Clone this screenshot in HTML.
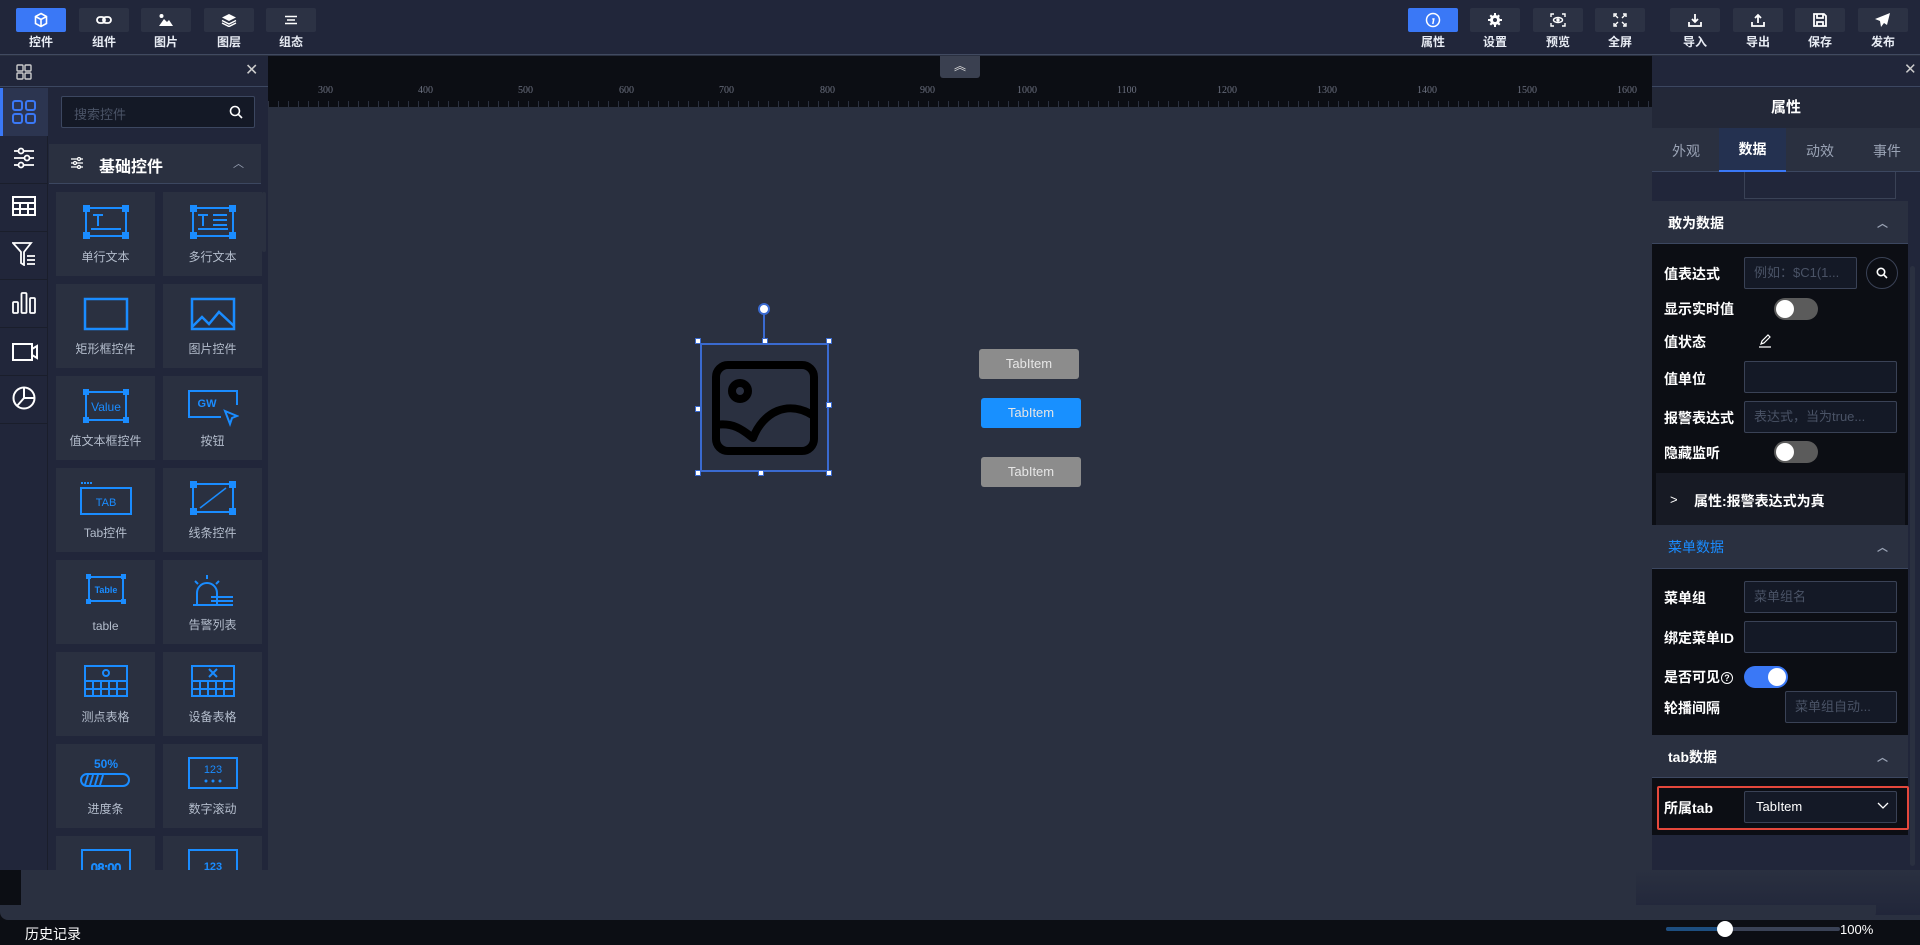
<!DOCTYPE html>
<html><head><meta charset="utf-8"><style>
*{box-sizing:border-box;margin:0;padding:0}
body{width:1920px;height:945px;overflow:hidden;background:#2a3040;font-family:"Liberation Sans","Noto Sans CJK SC",sans-serif;position:relative;color:#fff}
.abs{position:absolute}
.top{left:0;top:0;width:1920px;height:55px;background:#21263a;border-bottom:1px solid #414a60}
.tb{position:absolute;top:8px;width:50px;height:24px;background:#2c3244;border-radius:2px;display:flex;align-items:center;justify-content:center}
.tb.on{background:#3a78f6}
.tl{position:absolute;top:33px;width:50px;text-align:center;font-size:12px;font-weight:bold;color:#e8ecf4}
.ruler{left:268px;top:56px;width:1384px;height:51px;background:#0c0e14}
.rl{position:absolute;top:29px;font-family:"Liberation Serif",serif;font-size:10px;color:#6c7180}
.lp{left:0;top:56px;width:268px;height:814px;background:#21263a}
.card{position:absolute;width:99px;height:84px;background:#2a3040;text-align:center}
.card .lb{position:absolute;bottom:11px;width:100%;font-size:12px;color:#b4bdcc}
.card svg{position:absolute;left:50%;top:13px;transform:translateX(-50%)}
.rp{left:1652px;top:56px;width:268px;height:814px;background:#21263a}
.sec{position:absolute;left:0;width:256px;background:#2a3040;border-bottom:1px solid #3c4760;font-size:14px;font-weight:bold}
.dark{position:absolute;left:0;width:256px;background:#0c0e14}
.lab{position:absolute;left:12px;font-size:14px;font-weight:bold;color:#fff}
.inp{position:absolute;border:1px solid #3a4256;background:#141926;border-radius:2px;font-size:13px;color:#4a5366;padding-left:9px;line-height:30px;white-space:nowrap;overflow:hidden}
.tg{position:absolute;width:44px;height:22px;border-radius:11px;background:#5b5b5b}
.tg::after{content:"";position:absolute;left:2px;top:2px;width:18px;height:18px;border-radius:50%;background:#fff}
.tg.on{background:#3a78f6}.tg.on::after{left:24px}
.caret{position:absolute;right:20px;font-size:11px;color:#9aa3b5}
.tab{position:absolute;border-radius:3px;color:#e6e6e6;font-size:13px;text-align:center;line-height:30px}
</style></head><body>

<div class="abs top">
 <div class="tb on" style="left:16px"><svg width="16" height="16" viewBox="0 0 16 16" fill="none" stroke="#fff" stroke-width="1.6"><path d="M8 1.5l5.5 3v7L8 14.5l-5.5-3v-7z M2.5 4.5L8 7.5l5.5-3 M8 7.5v7"/></svg></div><div class="tl" style="left:16px">控件</div>
 <div class="tb" style="left:79px"><svg width="16" height="10" viewBox="0 0 16 10" fill="none" stroke="#fff" stroke-width="1.8"><rect x="1" y="2" width="8" height="6" rx="3"/><rect x="7" y="2" width="8" height="6" rx="3"/></svg></div><div class="tl" style="left:79px">组件</div>
 <div class="tb" style="left:141px"><svg width="16" height="14" viewBox="0 0 16 14" fill="#fff"><circle cx="3.5" cy="3" r="2"/><path d="M1 13l5-7 3 3 2-2 4 6z"/></svg></div><div class="tl" style="left:141px">图片</div>
 <div class="tb" style="left:204px"><svg width="16" height="14" viewBox="0 0 16 14" fill="#fff"><path d="M8 1l7 3.5-7 3.5-7-3.5z"/><path d="M1 7.5l7 3.5 7-3.5" stroke="#fff" fill="none" stroke-width="1.5"/><path d="M1 10l7 3.5 7-3.5" stroke="#fff" fill="none" stroke-width="1.5"/></svg></div><div class="tl" style="left:204px">图层</div>
 <div class="tb" style="left:266px"><svg width="14" height="10" viewBox="0 0 14 10" stroke="#fff" stroke-width="1.5"><path d="M1 1.5h12M3 5h8M1 8.5h12"/></svg></div><div class="tl" style="left:266px">组态</div>

 <div class="tb on" style="left:1408px"><svg width="16" height="16" viewBox="0 0 16 16" fill="none" stroke="#fff" stroke-width="1.5"><circle cx="8" cy="8" r="6.5"/><path d="M8.5 4.2v.1M7.3 7h1.5l-1 5"/></svg></div><div class="tl" style="left:1408px">属性</div>
 <div class="tb" style="left:1470px"><svg width="14" height="14" viewBox="0 0 14 14" fill="#fff"><circle cx="7" cy="7" r="5"/><path d="M6 0h2v3H6zM6 11h2v3H6zM0 6h3v2H0zM11 6h3v2h-3z" /><path d="M1.5 3l1.5-1.5 2 2-1.5 1.5zM9 10.5l1.5-1.5 2 2-1.5 1.5zM10.5 1.5L12 3l-2 2-1.5-1.5zM3 12.5L1.5 11l2-2L5 10.5z"/><circle cx="7" cy="7" r="2" fill="#2c3244"/></svg></div><div class="tl" style="left:1470px">设置</div>
 <div class="tb" style="left:1533px"><svg width="16" height="14" viewBox="0 0 16 14" fill="none" stroke="#fff" stroke-width="1.4"><path d="M1 4V1h3M12 1h3v3M15 10v3h-3M4 13H1v-3"/><ellipse cx="8" cy="7" rx="4.5" ry="2.5"/><circle cx="8" cy="7" r="1" fill="#fff"/></svg></div><div class="tl" style="left:1533px">预览</div>
 <div class="tb" style="left:1595px"><svg width="14" height="14" viewBox="0 0 14 14" fill="none" stroke="#fff" stroke-width="1.4"><path d="M1 4V1h3M10 1h3v3M13 10v3h-3M4 13H1v-3M2 2l3 3M12 2L9 5M12 12L9 9M2 12l3-3"/></svg></div><div class="tl" style="left:1595px">全屏</div>
 <div class="tb" style="left:1670px"><svg width="14" height="14" viewBox="0 0 14 14" fill="none" stroke="#fff" stroke-width="1.8"><path d="M7 1v8M4 6l3 3 3-3M1 9v4h12V9"/></svg></div><div class="tl" style="left:1670px">导入</div>
 <div class="tb" style="left:1733px"><svg width="14" height="14" viewBox="0 0 14 14" fill="none" stroke="#fff" stroke-width="1.8"><path d="M7 10V2M4 5l3-3 3 3M1 9v4h12V9"/></svg></div><div class="tl" style="left:1733px">导出</div>
 <div class="tb" style="left:1795px"><svg width="14" height="14" viewBox="0 0 14 14" fill="none" stroke="#fff" stroke-width="1.8"><path d="M1 1h10l2 2v10H1z M4 1v4h6V1 M4 13V9h6v4"/></svg></div><div class="tl" style="left:1795px">保存</div>
 <div class="tb" style="left:1858px"><svg width="16" height="14" viewBox="0 0 16 14" fill="#fff"><path d="M15 0L0 6l5 2 1 6 3-4 3 2z"/></svg></div><div class="tl" style="left:1858px">发布</div>
</div>

<div class="abs ruler">
 <div class="abs" style="left:0;bottom:0;width:1384px;height:6px;background:repeating-linear-gradient(90deg,#2c3140 0 1px,transparent 1px 10px)"></div>
 <span class="rl" style="left:50px">300</span><span class="rl" style="left:150px">400</span><span class="rl" style="left:250px">500</span><span class="rl" style="left:351px">600</span><span class="rl" style="left:451px">700</span><span class="rl" style="left:552px">800</span><span class="rl" style="left:652px">900</span><span class="rl" style="left:749px">1000</span><span class="rl" style="left:849px">1100</span><span class="rl" style="left:949px">1200</span><span class="rl" style="left:1049px">1300</span><span class="rl" style="left:1149px">1400</span><span class="rl" style="left:1249px">1500</span><span class="rl" style="left:1349px">1600</span>
</div>
<div class="abs" style="left:940px;top:56px;width:40px;height:22px;background:#3a4050;border-radius:0 0 3px 3px;text-align:center;color:#ddd;font-size:12px;line-height:20px">︽</div>

<!-- canvas element -->
<div class="abs" style="left:700px;top:343px;width:129px;height:129px;border:2px solid #3a6ad0"></div>
<div class="abs" style="left:763px;top:311px;width:2px;height:32px;background:#3a6ad0"></div>
<div class="abs" style="left:758px;top:303px;width:12px;height:12px;border-radius:50%;background:#fff;border:2px solid #3a6ad0"></div>
<div class="abs" style="left:695px;top:338px;width:6px;height:6px;background:#fff;border:1px solid #3a6ad0"></div>
<div class="abs" style="left:762px;top:338px;width:6px;height:6px;background:#fff;border:1px solid #3a6ad0"></div>
<div class="abs" style="left:826px;top:338px;width:6px;height:6px;background:#fff;border:1px solid #3a6ad0"></div>
<div class="abs" style="left:695px;top:406px;width:6px;height:6px;background:#fff;border:1px solid #3a6ad0"></div>
<div class="abs" style="left:826px;top:402px;width:6px;height:6px;background:#fff;border:1px solid #3a6ad0"></div>
<div class="abs" style="left:695px;top:470px;width:6px;height:6px;background:#fff;border:1px solid #3a6ad0"></div>
<div class="abs" style="left:758px;top:470px;width:6px;height:6px;background:#fff;border:1px solid #3a6ad0"></div>
<div class="abs" style="left:826px;top:470px;width:6px;height:6px;background:#fff;border:1px solid #3a6ad0"></div>
<svg class="abs" style="left:712px;top:361px" width="106" height="94" viewBox="0 0 106 94" fill="none" stroke="#000" stroke-width="8" stroke-linejoin="round"><rect x="4" y="4" width="98" height="86" rx="12"/><circle cx="28" cy="30" r="8"/><path d="M4 64c18-3 28 6 37 13 10-26 35-39 61-22"/></svg>
<div class="tab" style="left:979px;top:349px;width:100px;height:30px;background:#8c8c8c">TabItem</div>
<div class="tab" style="left:981px;top:398px;width:100px;height:30px;background:#1890ff">TabItem</div>
<div class="tab" style="left:981px;top:457px;width:100px;height:30px;background:#8c8c8c">TabItem</div>

<!-- left panel -->
<div class="abs lp">
 <div class="abs" style="left:0;top:0;width:268px;height:31px;border-bottom:1px solid #3c4760"></div>
 <svg class="abs" style="left:16px;top:8px" width="16" height="16" viewBox="0 0 16 16" fill="none" stroke="#ccc" stroke-width="1.4"><rect x="1" y="1" width="6" height="6" rx="1"/><rect x="9" y="1" width="6" height="6" rx="1"/><rect x="1" y="9" width="6" height="6" rx="1"/><rect x="9" y="9" width="6" height="6" rx="1"/></svg>
 <div class="abs" style="left:245px;top:4px;font-size:16px;color:#ccc">✕</div>
 <div class="abs" style="left:0;top:32px;width:48px;height:782px;background:#21263a;border-right:1px solid #1a1e2b"></div>
 <div class="abs" style="left:0;top:32px;width:48px;height:48px;background:#2c3550;border-left:3px solid #3a78f6"></div>
 <svg class="abs" style="left:12px;top:44px" width="24" height="24" viewBox="0 0 24 24" fill="none" stroke="#3a78f6" stroke-width="2"><rect x="1" y="1" width="9" height="9" rx="2"/><rect x="14" y="1" width="9" height="9" rx="2"/><rect x="1" y="14" width="9" height="9" rx="2"/><rect x="14" y="14" width="9" height="9" rx="2"/></svg>
 <svg class="abs" style="left:13px;top:91px" width="22" height="22" viewBox="0 0 22 22" fill="none" stroke="#fff" stroke-width="1.8"><path d="M1 4h20M1 11h20M1 18h20"/><circle cx="8" cy="4" r="2.5" fill="#21263a"/><circle cx="14" cy="11" r="2.5" fill="#21263a"/><circle cx="8" cy="18" r="2.5" fill="#21263a"/></svg>
 <div class="abs" style="left:0;top:127px;width:48px;height:1px;background:#1a1e2b"></div>
 <svg class="abs" style="left:12px;top:140px" width="24" height="20" viewBox="0 0 24 20" fill="none" stroke="#fff" stroke-width="2"><rect x="1" y="1" width="22" height="18"/><path d="M1 7h22M1 13h22M8 7v12M16 7v12"/></svg>
 <div class="abs" style="left:0;top:175px;width:48px;height:1px;background:#1a1e2b"></div>
 <svg class="abs" style="left:12px;top:186px" width="26" height="24" viewBox="0 0 26 24" fill="none" stroke="#fff" stroke-width="1.8"><path d="M1 1h18l-7 9v13l-3-2v-11z M15 14h8M15 18h8M15 22h8"/></svg>
 <div class="abs" style="left:0;top:223px;width:48px;height:1px;background:#1a1e2b"></div>
 <svg class="abs" style="left:12px;top:236px" width="24" height="22" viewBox="0 0 24 22" fill="none" stroke="#fff" stroke-width="1.8"><rect x="1" y="10" width="5" height="11" rx="1"/><rect x="9.5" y="1" width="5" height="20" rx="1"/><rect x="18" y="6" width="5" height="15" rx="1"/></svg>
 <div class="abs" style="left:0;top:271px;width:48px;height:1px;background:#1a1e2b"></div>
 <svg class="abs" style="left:12px;top:287px" width="26" height="18" viewBox="0 0 26 18" fill="none" stroke="#fff" stroke-width="2"><rect x="1" y="1" width="19" height="16"/><path d="M20 6l5-3v12l-5-3"/></svg>
 <div class="abs" style="left:0;top:319px;width:48px;height:1px;background:#1a1e2b"></div>
 <svg class="abs" style="left:12px;top:330px" width="24" height="24" viewBox="0 0 24 24" fill="none" stroke="#fff" stroke-width="2"><circle cx="12" cy="12" r="10.5"/><path d="M12 1.5V12h10.5M12 12l-7 8"/></svg>
 <div class="abs" style="left:0;top:367px;width:48px;height:1px;background:#1a1e2b"></div>

 <div class="abs" style="left:61px;top:40px;width:194px;height:32px;border:1px solid #3c4760;background:#141926;border-radius:2px;font-size:13px;color:#4a5366;padding:7px 12px">搜索控件</div>
 <svg class="abs" style="left:229px;top:49px" width="14" height="14" viewBox="0 0 14 14" fill="none" stroke="#fff" stroke-width="1.6"><circle cx="6" cy="6" r="4.5"/><path d="M9.5 9.5l3.5 3.5"/></svg>
 <div class="abs" style="left:49px;top:88px;width:212px;height:40px;background:#2a3040;border-bottom:1px solid #3c4760"></div>
 <svg class="abs" style="left:70px;top:101px" width="14" height="12" viewBox="0 0 14 12" fill="none" stroke="#fff" stroke-width="1.3"><path d="M1 2h12M1 6h12M1 10h12"/><circle cx="9" cy="2" r="1.5" fill="#2a3040"/><circle cx="5" cy="6" r="1.5" fill="#2a3040"/><circle cx="9" cy="10" r="1.5" fill="#2a3040"/></svg>
 <div class="abs" style="left:99px;top:97px;font-size:16px;font-weight:bold">基础控件</div>
 <div class="abs" style="left:233px;top:99px;font-size:11px;color:#9aa3b5">︿</div>
 <div class="abs" style="left:262px;top:136px;width:4px;height:60px;background:#2a3040;border-radius:2px"></div>

 <div class="card" style="left:56px;top:136px"><svg width="46" height="34" viewBox="0 0 46 34" fill="none" stroke="#1a8cff" stroke-width="2"><rect x="3" y="3" width="40" height="28"/><path d="M8 24h30M10 10h10M15 10v11"/><g fill="#1a8cff"><rect x="0" y="0" width="6" height="6"/><rect x="40" y="0" width="6" height="6"/><rect x="0" y="28" width="6" height="6"/><rect x="40" y="28" width="6" height="6"/></g></svg><div class="lb">单行文本</div></div>
 <div class="card" style="left:163px;top:136px"><svg width="46" height="34" viewBox="0 0 46 34" fill="none" stroke="#1a8cff" stroke-width="2"><rect x="3" y="3" width="40" height="28"/><path d="M8 24h30M8 10h10M13 10v11M23 10h14M23 15h14M23 20h14"/><g fill="#1a8cff"><rect x="0" y="0" width="6" height="6"/><rect x="40" y="0" width="6" height="6"/><rect x="0" y="28" width="6" height="6"/><rect x="40" y="28" width="6" height="6"/></g></svg><div class="lb">多行文本</div></div>
 <div class="card" style="left:56px;top:228px"><svg width="46" height="34" viewBox="0 0 46 34" fill="none" stroke="#1a8cff" stroke-width="2.5"><rect x="2" y="2" width="42" height="30"/></svg><div class="lb">矩形框控件</div></div>
 <div class="card" style="left:163px;top:228px"><svg width="46" height="34" viewBox="0 0 46 34" fill="none" stroke="#1a8cff" stroke-width="2.5"><rect x="2" y="2" width="42" height="30"/><path d="M2 30l10-10 7 7 10-12 15 14"/></svg><div class="lb">图片控件</div></div>
 <div class="card" style="left:56px;top:320px"><svg width="46" height="34" viewBox="0 0 46 34"><rect x="3" y="3" width="40" height="28" fill="none" stroke="#1a8cff" stroke-width="2"/><g fill="#1a8cff"><rect x="0" y="0" width="6" height="6"/><rect x="40" y="0" width="6" height="6"/><rect x="0" y="28" width="6" height="6"/><rect x="40" y="28" width="6" height="6"/></g><text x="23" y="22" text-anchor="middle" font-size="12" fill="#1a8cff" font-family="Liberation Sans">Value</text></svg><div class="lb">值文本框控件</div></div>
 <div class="card" style="left:163px;top:320px"><svg width="52" height="38" viewBox="0 0 52 38" fill="none" stroke="#1a8cff" stroke-width="2"><path d="M34 28H2V2h48v14"/><path d="M38 22l12 5-5 2-2 6z"/><text x="20" y="18" text-anchor="middle" font-size="11" fill="#1a8cff" stroke="none" font-family="Liberation Sans" font-weight="bold">GW</text></svg><div class="lb">按钮</div></div>
 <div class="card" style="left:56px;top:412px"><svg width="52" height="34" viewBox="0 0 52 34" fill="none" stroke="#1a8cff" stroke-width="2"><rect x="1" y="7" width="50" height="26"/><path d="M1 2h12" stroke-dasharray="2 1"/><text x="26" y="25" text-anchor="middle" font-size="11" fill="#1a8cff" stroke="none" font-family="Liberation Sans">TAB</text></svg><div class="lb">Tab控件</div></div>
 <div class="card" style="left:163px;top:412px"><svg width="46" height="34" viewBox="0 0 46 34" fill="none" stroke="#1a8cff" stroke-width="2"><rect x="3" y="3" width="40" height="28"/><path d="M10 27L36 7" stroke-width="1.5"/><g fill="#1a8cff"><rect x="0" y="0" width="6" height="6"/><rect x="40" y="0" width="6" height="6"/><rect x="0" y="28" width="6" height="6"/><rect x="40" y="28" width="6" height="6"/></g></svg><div class="lb">线条控件</div></div>
 <div class="card" style="left:56px;top:504px"><svg width="40" height="32" viewBox="0 0 40 32"><rect x="3" y="4" width="34" height="24" fill="none" stroke="#1a8cff" stroke-width="2"/><g fill="#1a8cff"><rect x="0" y="1" width="5" height="5"/><rect x="35" y="1" width="5" height="5"/><rect x="0" y="26" width="5" height="5"/><rect x="35" y="26" width="5" height="5"/></g><text x="20" y="20" text-anchor="middle" font-size="9" fill="#1a8cff" font-family="Liberation Sans" font-weight="bold">Table</text></svg><div class="lb">table</div></div>
 <div class="card" style="left:163px;top:504px"><svg width="44" height="36" viewBox="0 0 44 36" fill="none" stroke="#1a8cff" stroke-width="2"><path d="M6 32V20a10 10 0 0 1 20 0v12M16 2v4M4 8l3 3M28 8l-3 3M2 32h18M20 24h22M20 28h22M20 32h22" /></svg><div class="lb">告警列表</div></div>
 <div class="card" style="left:56px;top:596px"><svg width="44" height="32" viewBox="0 0 44 32" fill="none" stroke="#1a8cff" stroke-width="2"><rect x="1" y="1" width="42" height="30"/><path d="M1 16h42M1 24h42M9 16v15M17 16v15M25 16v15M33 16v15"/><circle cx="22" cy="8" r="3"/></svg><div class="lb">测点表格</div></div>
 <div class="card" style="left:163px;top:596px"><svg width="44" height="32" viewBox="0 0 44 32" fill="none" stroke="#1a8cff" stroke-width="2"><rect x="1" y="1" width="42" height="30"/><path d="M1 16h42M1 24h42M9 16v15M17 16v15M25 16v15M33 16v15M18 4l8 8M26 4l-8 8"/></svg><div class="lb">设备表格</div></div>
 <div class="card" style="left:56px;top:688px"><svg width="52" height="32" viewBox="0 0 52 32"><text x="26" y="11" text-anchor="middle" font-size="12" fill="#1a8cff" font-family="Liberation Sans" font-weight="bold">50%</text><rect x="1" y="17" width="48" height="12" rx="6" fill="none" stroke="#1a8cff" stroke-width="2"/><path d="M5 28l3-10M10 28l3-10M15 28l3-10M20 28l3-10" stroke="#1a8cff" stroke-width="2"/></svg><div class="lb">进度条</div></div>
 <div class="card" style="left:163px;top:688px"><svg width="50" height="32" viewBox="0 0 50 32"><rect x="1" y="1" width="48" height="30" fill="none" stroke="#1a8cff" stroke-width="2"/><text x="25" y="16" text-anchor="middle" font-size="11" fill="#1a8cff" font-family="Liberation Sans">123</text><g fill="#1a8cff"><circle cx="18" cy="24" r="1.5"/><circle cx="25" cy="24" r="1.5"/><circle cx="32" cy="24" r="1.5"/></g></svg><div class="lb">数字滚动</div></div>
 <div class="card" style="left:56px;top:780px;height:34px;overflow:hidden"><svg width="50" height="30" viewBox="0 0 50 30"><rect x="1" y="1" width="48" height="40" fill="none" stroke="#1a8cff" stroke-width="2"/><text x="25" y="23" text-anchor="middle" font-size="12" fill="none" stroke="#1a8cff" font-family="Liberation Sans">08:00</text></svg></div>
 <div class="card" style="left:163px;top:780px;height:34px;overflow:hidden"><svg width="50" height="30" viewBox="0 0 50 30"><rect x="1" y="1" width="48" height="40" fill="none" stroke="#1a8cff" stroke-width="2"/><text x="25" y="21" text-anchor="middle" font-size="11" fill="#1a8cff" font-family="Liberation Sans" font-weight="bold">123</text></svg></div>
</div>

<!-- right panel -->
<div class="abs rp">
 <div class="abs" style="left:0;top:0;width:268px;height:31px;border-bottom:1px solid #3c4760"></div>
 <div class="abs" style="left:252px;top:4px;font-size:15px;color:#ccc">✕</div>
 <div class="abs" style="left:0;top:32px;width:268px;height:40px;background:#232838;text-align:center;line-height:40px;font-size:15px;font-weight:bold">属性</div>
 <div class="abs" style="left:0;top:72px;width:268px;height:44px;background:#2a3040;border-bottom:1px solid #3c4760;font-size:14px;color:#9aa3b5">
  <span class="abs" style="left:20px;top:13px">外观</span>
  <div class="abs" style="left:67px;top:0;width:67px;height:44px;background:#243150;border-bottom:2px solid #3a78f6;text-align:center;line-height:42px;color:#fff;font-weight:bold">数据</div>
  <span class="abs" style="left:154px;top:13px">动效</span><span class="abs" style="left:221px;top:13px">事件</span>
 </div>
 <div class="abs" style="left:0;top:116px;width:256px;height:29px;background:#21263a"></div>
 <div class="abs" style="left:92px;top:116px;width:152px;height:27px;border:1px solid #3a4256;border-top:none"></div>
 <div class="sec" style="top:145px;height:43px"><span class="abs" style="left:16px;top:12px">敢为数据</span><span class="caret" style="top:14px">︿</span></div>
 <div class="dark" style="top:188px;height:281px">
  <span class="lab" style="top:20px">值表达式</span><div class="inp" style="left:92px;top:13px;width:113px;height:32px">例如：$C1(1...</div>
  <div class="abs" style="left:214px;top:13px;width:32px;height:32px;border:1px solid #3a4256;border-radius:50%"></div>
  <svg class="abs" style="left:224px;top:23px" width="12" height="12" viewBox="0 0 12 12" fill="none" stroke="#fff" stroke-width="1.6"><circle cx="5" cy="5" r="3.7"/><path d="M8 8l3 3"/></svg>
  <span class="lab" style="top:55px">显示实时值</span><div class="tg" style="left:122px;top:54px"></div>
  <span class="lab" style="top:88px">值状态</span>
  <svg class="abs" style="left:106px;top:90px" width="14" height="14" viewBox="0 0 14 14" fill="none" stroke="#fff" stroke-width="1.2"><path d="M3 10l1-3 6-6 2 2-6 6z M1 13h12"/></svg>
  <span class="lab" style="top:125px">值单位</span><div class="inp" style="left:92px;top:117px;width:153px;height:32px"></div>
  <span class="lab" style="top:164px">报警表达式</span><div class="inp" style="left:92px;top:157px;width:153px;height:32px">表达式，当为true...</div>
  <span class="lab" style="top:199px">隐藏监听</span><div class="tg" style="left:122px;top:197px"></div>
  <div class="abs" style="left:4px;top:229px;width:249px;height:52px;background:#171a24"></div>
  <span class="abs" style="left:18px;top:248px;font-size:13px;color:#fff">&gt;</span>
  <span class="abs" style="left:42px;top:247px;font-size:14px;font-weight:bold">属性:报警表达式为真</span>
 </div>
 <div class="sec" style="top:469px;height:44px"><span class="abs" style="left:16px;top:12px;color:#1a8cff;font-weight:normal">菜单数据</span><span class="caret" style="top:14px">︿</span></div>
 <div class="dark" style="top:513px;height:166px">
  <span class="lab" style="top:19px">菜单组</span><div class="inp" style="left:92px;top:12px;width:153px;height:32px">菜单组名</div>
  <span class="lab" style="top:59px">绑定菜单ID</span><div class="inp" style="left:92px;top:52px;width:153px;height:32px"></div>
  <span class="lab" style="top:98px">是否可见<span style="display:inline-block;width:12px;height:12px;border:1px solid #fff;border-radius:50%;font-size:9px;text-align:center;line-height:11px;vertical-align:1px;margin-left:1px">?</span></span><div class="tg on" style="left:92px;top:97px"></div>
  <span class="lab" style="top:129px">轮播间隔</span><div class="inp" style="left:133px;top:122px;width:112px;height:32px">菜单组自动...</div>
 </div>
 <div class="sec" style="top:679px;height:43px"><span class="abs" style="left:16px;top:12px">tab数据</span><span class="caret" style="top:14px">︿</span></div>
 <div class="dark" style="top:722px;height:57px">
  <div class="abs" style="left:5px;top:8px;width:252px;height:44px;border:2px solid #e5483c;border-radius:2px"></div>
  <span class="lab" style="top:20px">所属tab</span>
  <div class="inp" style="left:92px;top:13px;width:153px;height:32px;color:#fff;padding-left:11px">TabItem</div>
  <svg class="abs" style="left:225px;top:24px" width="12" height="8" viewBox="0 0 12 8" fill="none" stroke="#fff" stroke-width="1.3"><path d="M1 1l5 5 5-5"/></svg>
 </div>
 <div class="abs" style="left:0;top:779px;width:256px;height:35px;background:#21263a"></div>
 <div class="abs" style="left:258px;top:210px;width:5px;height:600px;background:#2a3040;border-radius:3px"></div>
</div>

<!-- bottom -->
<div class="abs" style="left:0;top:870px;width:21px;height:75px;background:#0c0e14"></div>
<div class="abs" style="left:1636px;top:870px;width:284px;height:45px;background:linear-gradient(#2a3040,#21263a)"></div>
<div class="abs" style="left:0;top:920px;width:1920px;height:25px;background:#0c0e14"></div>
<div class="abs" style="left:0;top:905px;width:1876px;height:15px;background:#2a3040;border-radius:0 0 8px 8px"></div>
<div class="abs" style="left:25px;top:924px;font-size:14px;color:#fff">历史记录</div>
<div class="abs" style="left:1666px;top:927px;width:174px;height:4px;background:#3a4256;border-radius:2px"></div>
<div class="abs" style="left:1666px;top:927px;width:58px;height:4px;background:#1d4e80;border-radius:2px"></div>
<div class="abs" style="left:1717px;top:921px;width:16px;height:16px;border-radius:50%;background:#fff"></div>
<div class="abs" style="left:1840px;top:922px;font-size:13px;color:#fff">100%</div>
</body></html>
